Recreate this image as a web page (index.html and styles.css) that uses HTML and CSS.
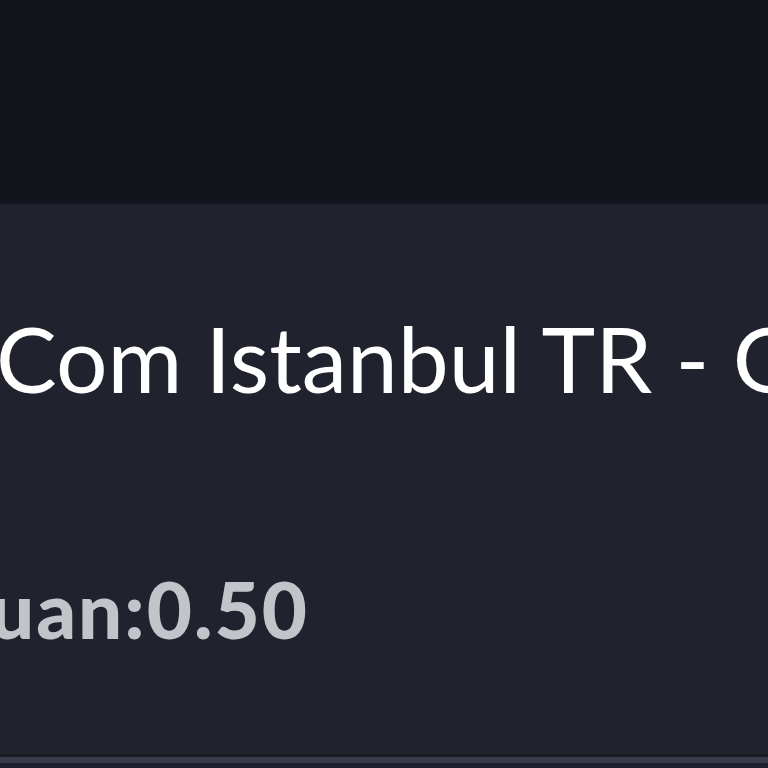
FILE: index.html
```html
<!DOCTYPE html>
<html>
<head>
<meta charset="utf-8">
<link rel="stylesheet" href="styles.css">
</head>
<body>
<div class="topbar"></div>
<div class="card">
  <div class="title">Com Istanbul TR - G</div>
  <div class="odds">uan:0.50</div>
</div>
<div class="divider"></div>
<div class="after"></div>
</body>
</html>
```
FILE: styles.css
```css
html, body {
  margin: 0;
  padding: 0;
  background: #1f222d;
  width: 768px;
  height: 768px;
  overflow: hidden;
}
.topbar {
  height: 203px;
  background: #13131c;
  border-bottom: 2px solid #1b1c26;
}
.card {
  height: 549px;
  background: #20232e;
  overflow: hidden;
  font-family: Lato, "Noto Sans", sans-serif;
  white-space: nowrap;
  border-bottom: 3px solid #1a1c25;
}
.title {
  color: #ffffff;
  font-size: 91px;
  font-weight: 400;
  line-height: 1;
  padding-top: 107px;
  margin-left: -4px;
}
.odds {
  color: #c3c4ca;
  font-size: 78px;
  font-weight: 900;
  letter-spacing: 2px;
  line-height: 1;
  padding-top: 167px;
  margin-left: -10px;
}
.divider {
  height: 6px;
  background: #383b4a;
}
.after {
  height: 8px;
  background: #1e202b;
}
```
